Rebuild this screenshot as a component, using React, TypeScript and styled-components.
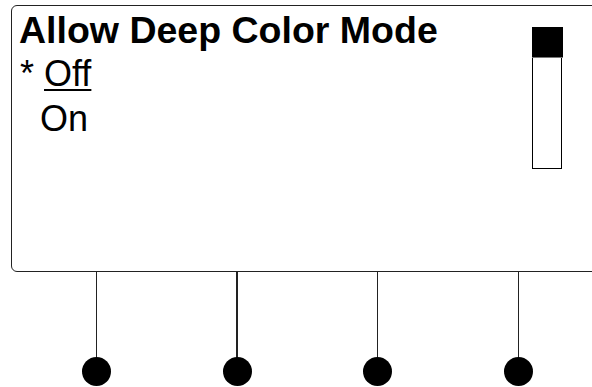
import styled, { createGlobalStyle } from "styled-components";

const GlobalStyle = createGlobalStyle`
  html, body {
    margin: 0;
    padding: 0;
    background: #ffffff;
  }
  body {
    font-family: "Liberation Sans", Arial, Helvetica, sans-serif;
    color: #000000;
  }
`;

const options = [
  { label: "Off", selected: true },
  { label: "On", selected: false },
];

export default function App() {
  return (
    <>
      <GlobalStyle />
      <Page>
        <Screen>
          <MenuArea>
            <Title>Allow Deep Color Mode</Title>
            {options.map((opt) => (
              <OptionRow key={opt.label}>
                {/* selection marker takes the width of two characters */}
                <Marker>{opt.selected ? "*\u00a0" : "\u00a0\u00a0"}</Marker>
                <OptionLabel $selected={opt.selected}>{opt.label}</OptionLabel>
              </OptionRow>
            ))}
          </MenuArea>
          <ScrollTrack>
            <ScrollThumb />
          </ScrollTrack>
        </Screen>
        <KeyRow>
          {[0, 1, 2, 3].map((i) => (
            <SoftKey key={i}>
              <Stem />
              <Knob />
            </SoftKey>
          ))}
        </KeyRow>
      </Page>
    </>
  );
}

const Page = styled.div`
  width: 592px;
  height: 387px;
  overflow: hidden;
  display: flex;
  flex-direction: column;
`;

const Screen = styled.div`
  box-sizing: border-box;
  margin: 5px 0 0 11px;
  width: 600px;
  height: 267px;
  border: 1.5px solid #222;
  border-radius: 6px;
  display: flex;
  padding: 0 48px 0 7px;
`;

const MenuArea = styled.div`
  flex: 1;
  display: flex;
  flex-direction: column;
  padding-top: 3px;
`;

const Title = styled.div`
  font-size: 37.5px;
  font-weight: bold;
  line-height: 42px;
  white-space: nowrap;
`;

const OptionRow = styled.div`
  display: flex;
  font-size: 36px;
  line-height: 45px;
  white-space: pre;
`;

const Marker = styled.span`
  padding-left: 1px;
`;

const OptionLabel = styled.span<{ $selected: boolean }>`
  text-decoration: ${(p) => (p.$selected ? "underline" : "none")};
  text-decoration-thickness: 2px;
  text-underline-offset: 3px;
`;

const ScrollTrack = styled.div`
  box-sizing: border-box;
  margin-top: 21px;
  width: 30px;
  height: 142px;
  border: 1.5px solid #000;
  border-top-width: 0;
`;

const ScrollThumb = styled.div`
  height: 30px;
  background: #000;
  border-bottom: 1.5px solid #777;
  margin: 0 -1.5px;
`;

const KeyRow = styled.div`
  display: grid;
  grid-template-columns: repeat(4, 140.7px);
  padding-left: 26px;
`;

const SoftKey = styled.div`
  display: flex;
  flex-direction: column;
  align-items: center;
`;

const Stem = styled.div`
  width: 1.5px;
  height: 86px;
  background: #222;
`;

const Knob = styled.div`
  width: 29px;
  height: 29px;
  border-radius: 50%;
  background: #000;
  margin-top: -1px;
`;
